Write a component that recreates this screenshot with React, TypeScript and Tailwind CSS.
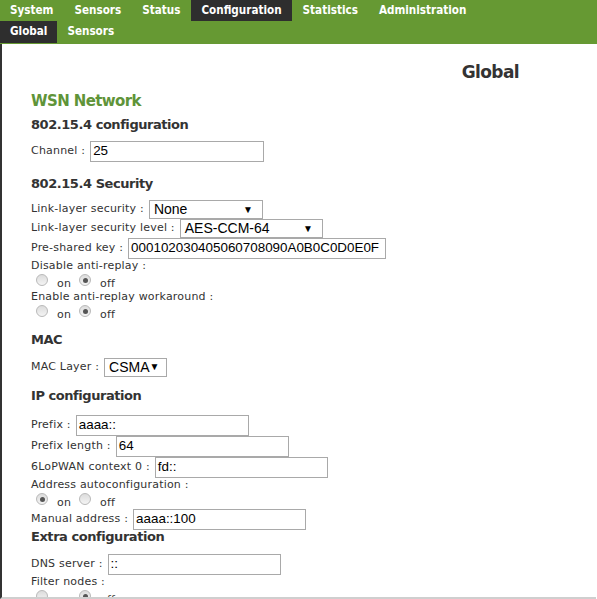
import React from "react"

const label = "font-['DejaVu_Sans',Verdana,sans-serif] text-[11px] tracking-[0.2px] text-[#333]"
const heading = "font-['DejaVu_Sans',Verdana,sans-serif] font-bold text-[13px] tracking-[-0.45px] text-[#333]"

function TextField({ value, width }: { value: string; width: string }) {
    return (
        <div className={`${width} h-[21px] border border-[#a9a9a9] bg-white flex items-center pl-[2px] font-['Liberation_Sans',Arial,sans-serif] text-[13.4px] text-black whitespace-nowrap overflow-hidden`}>
            {value}
        </div>
    )
}

function Select({ value, width }: { value: string; width: string }) {
    return (
        <div className={`${width} h-[19px] border border-[#a9a9a9] bg-white flex items-center justify-between pl-[4px] pr-[9px] font-['Liberation_Sans',Arial,sans-serif] text-[14px] text-black`}>
            <span>{value}</span>
            <span className="text-[10px] leading-none">▼</span>
        </div>
    )
}

function Radio({ checked }: { checked?: boolean }) {
    return (
        <span className="w-[12px] h-[12px] rounded-full border border-[#b9b9b9] bg-gradient-to-b from-[#dcdcdc] to-[#f4f4f4] flex items-center justify-center">
            {checked && <span className="w-[5px] h-[5px] rounded-full bg-[#555]" />}
        </span>
    )
}

function OnOff({ on }: { on: boolean }) {
    return (
        <div className={`h-[16px] flex items-start pl-[5px] ${label}`}>
            <Radio checked={on} />
            <span className="ml-[9px] mt-[4px] leading-none">on</span>
            <span className="ml-[8px]"><Radio checked={!on} /></span>
            <span className="ml-[9px] mt-[4px] leading-none">off</span>
        </div>
    )
}

function FieldRow({ name, children, h = "h-[21px]" }: { name: string; children: React.ReactNode; h?: string }) {
    return (
        <div className={`${h} flex items-center`}>
            <span className={`${label} mr-[5px]`}>{name} :</span>
            {children}
        </div>
    )
}

function TextRow({ children }: { children: React.ReactNode }) {
    return <div className={`h-[15px] flex items-center ${label}`}>{children}</div>
}

const topMenu = ["System", "Sensors", "Status", "Configuration", "Statistics", "Administration"]
const subMenu = ["Global", "Sensors"]

export default function App() {
    return (
        <div className="w-[597px] h-[599px] overflow-hidden bg-white">
            <nav className="bg-[#669933] h-[44px] font-['DejaVu_Sans_Condensed','DejaVu_Sans',sans-serif] font-bold text-[11.6px] text-white">
                <ul className="flex h-[21px] gap-[1px]">
                    {topMenu.map((m) => (
                        <li key={m} className={`px-[10px] flex items-center ${m === "Configuration" ? "bg-[#2e2e2e]" : ""}`}>{m}</li>
                    ))}
                </ul>
                <ul className="flex h-[22px]">
                    {subMenu.map((m) => (
                        <li key={m} className={`px-[10px] flex items-center ${m === "Global" ? "bg-[#2e2e2e]" : ""}`}>{m}</li>
                    ))}
                </ul>
            </nav>

            <div className="h-[555px] border-l-2 border-[#333] border-b-2 border-b-[#cfcfcf] w-[596px] overflow-hidden pl-[29px]">
                <div className="h-[19px]" />
                <div className="h-[20px] flex items-center justify-end pr-[77px] font-['DejaVu_Sans',Verdana,sans-serif] font-bold text-[17px] tracking-[-0.6px] text-[#333]">Global</div>
                <div className="h-[9px]" />
                <div className="h-[18px] flex items-center font-['DejaVu_Sans',Verdana,sans-serif] font-bold text-[15px] tracking-[-0.6px] text-[#5f9439]">WSN Network</div>
                <div className="h-[7px]" />
                <div className={`h-[16px] flex items-center ${heading}`}>802.15.4 configuration</div>
                <div className="h-[8px]" />
                <FieldRow name="Channel"><TextField value="25" width="w-[174px]" /></FieldRow>
                <div className="h-[14px]" />
                <div className={`h-[16px] flex items-center ${heading}`}>802.15.4 Security</div>
                <div className="h-[8px]" />

                <FieldRow name="Link-layer security" h="h-[19px]"><Select value="None" width="w-[114px]" /></FieldRow>
                <FieldRow name="Link-layer security level" h="h-[19px]"><Select value="AES-CCM-64" width="w-[143px]" /></FieldRow>
                <FieldRow name="Pre-shared key"><TextField value="000102030405060708090A0B0C0D0E0F" width="w-[258px]" /></FieldRow>
                <TextRow>Disable anti-replay :</TextRow>
                <OnOff on={false} />
                <TextRow>Enable anti-replay workaround :</TextRow>
                <OnOff on={false} />

                <div className="h-[11px]" />
                <div className={`h-[16px] flex items-center ${heading}`}>MAC</div>
                <div className="h-[9px]" />
                <FieldRow name="MAC Layer" h="h-[20px]"><Select value="CSMA" width="w-[63px]" /></FieldRow>
                <div className="h-[11px]" />
                <div className={`h-[16px] flex items-center ${heading}`}>IP configuration</div>
                <div className="h-[11px]" />

                <FieldRow name="Prefix"><TextField value="aaaa::" width="w-[173px]" /></FieldRow>
                <FieldRow name="Prefix length"><TextField value="64" width="w-[173px]" /></FieldRow>
                <FieldRow name="6LoPWAN context 0"><TextField value="fd::" width="w-[173px]" /></FieldRow>
                <TextRow>Address autoconfiguration :</TextRow>
                <OnOff on={true} />
                <FieldRow name="Manual address"><TextField value="aaaa::100" width="w-[173px]" /></FieldRow>
                <div className={`h-[14px] flex items-center ${heading}`}>Extra configuration</div>
                <div className="h-[10px]" />
                <FieldRow name="DNS server"><TextField value="::" width="w-[173px]" /></FieldRow>
                <TextRow>Filter nodes :</TextRow>
                <OnOff on={false} />
            </div>
        </div>
    )
}
